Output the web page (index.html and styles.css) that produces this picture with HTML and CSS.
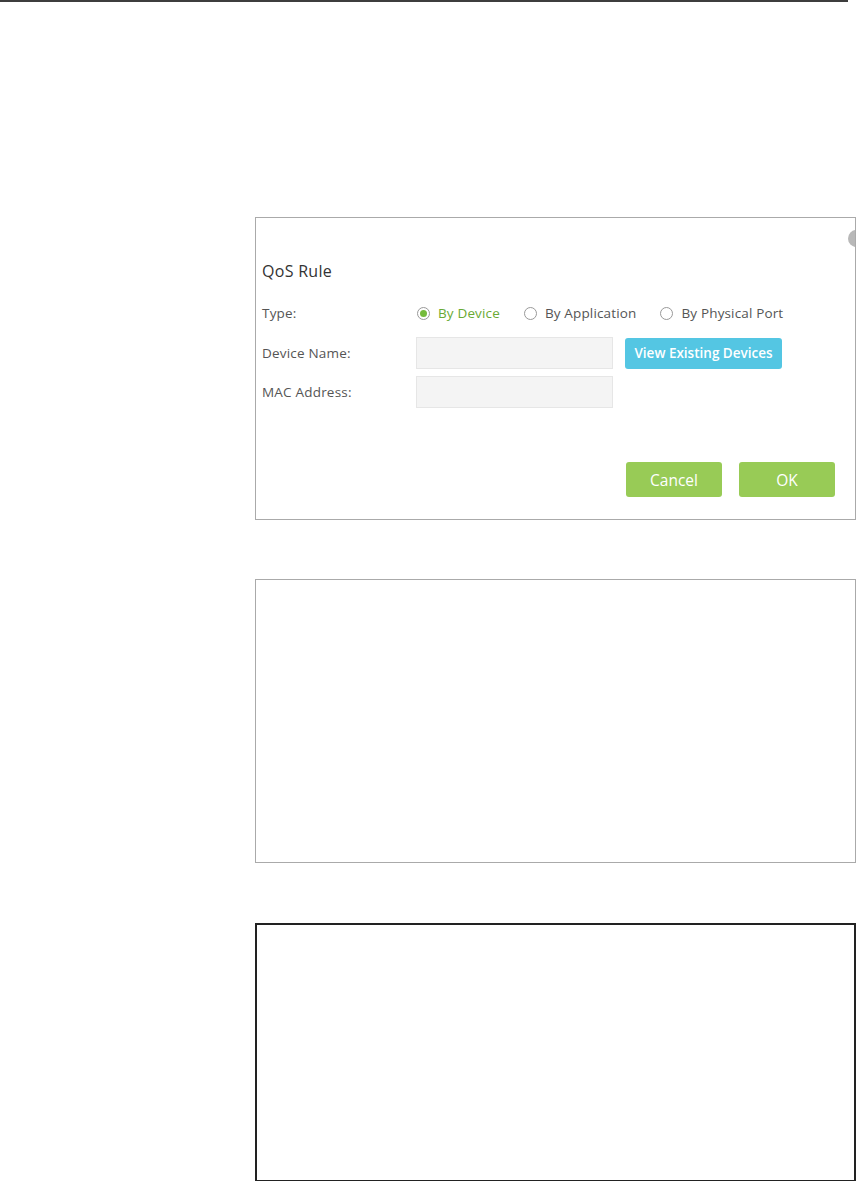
FILE: index.html
```html
<!DOCTYPE html>
<html lang="en">
<head>
    <meta charset="UTF-8">
    <meta name="viewport" content="width=device-width, initial-scale=1.0">
    <title>QoS Rule</title>
    <link rel="stylesheet" href="styles.css">
</head>
<body>
    <div class="top-rule"></div>

    <div class="page">
        <div class="panel dialog">
            <span class="close"></span>
            <h2 class="title">QoS Rule</h2>

            <div class="row type-row">
                <span class="label">Type:</span>
                <div class="radios">
                    <label class="radio checked"><span class="dot"></span>By Device</label>
                    <label class="radio"><span class="dot"></span>By Application</label>
                    <label class="radio"><span class="dot"></span>By Physical Port</label>
                </div>
            </div>

            <div class="row field-row">
                <span class="label">Device Name:</span>
                <input type="text" class="text-input">
                <button type="button" class="btn-view">View Existing Devices</button>
            </div>

            <div class="row field-row second">
                <span class="label">MAC Address:</span>
                <input type="text" class="text-input">
            </div>

            <div class="actions">
                <button type="button" class="btn-green">Cancel</button>
                <button type="button" class="btn-green">OK</button>
            </div>
        </div>

        <div class="panel blank"></div>

        <div class="panel dark"></div>
    </div>
</body>
</html>
```

FILE: styles.css
```css
body {
    margin: 0;
    padding: 0;
    background: #fff;
    font-family: "Open Sans", Arial, sans-serif;
    color: #555;
}

.top-rule {
    width: 848px;
    height: 2px;
    background-color: #3d3d3d;
}

.page {
    margin-left: 255px;
    width: 602px;
}

.panel {
    box-sizing: border-box;
    border: 1px solid #aaa;
    width: 601px;
}

.dialog {
    position: relative;
    overflow: hidden;
    margin-top: 215px;
    height: 303px;
    padding: 43px 20px 0 6px;
}

.close {
    position: absolute;
    top: 12px;
    right: -10px;
    width: 17px;
    height: 17px;
    border-radius: 50%;
    background-color: #b8b8b8;
}

.title {
    margin: 0;
    height: 20px;
    line-height: 20px;
    font-size: 16px;
    letter-spacing: 0.3px;
    font-weight: normal;
    color: #333;
}

.row {
    display: flex;
    align-items: center;
}

.label {
    width: 154px;
    font-size: 13.5px;
    letter-spacing: 0.2px;
    color: #555;
}

.type-row {
    margin-top: 22px;
    height: 20px;
}

.radios {
    display: flex;
    align-items: center;
}

.radio {
    display: flex;
    align-items: center;
    font-size: 13.5px;
    letter-spacing: 0.15px;
    color: #555;
    margin-right: 23px;
}

.radio .dot {
    box-sizing: border-box;
    width: 13px;
    height: 13px;
    border: 1px solid #999;
    border-radius: 50%;
    margin-right: 8px;
    margin-left: 1px;
    position: relative;
}

.radio.checked {
    color: #6aaa35;
}

.radio.checked .dot::after {
    content: "";
    position: absolute;
    top: 2px;
    left: 2px;
    width: 7px;
    height: 7px;
    border-radius: 50%;
    background-color: #75bb3c;
}

.field-row {
    margin-top: 14px;
    height: 32px;
}

.field-row.second {
    margin-top: 7px;
}

.text-input {
    box-sizing: border-box;
    width: 197px;
    height: 32px;
    margin: 0;
    background-color: #f4f4f4;
    border: 1px solid #e6e6e6;
    border-radius: 0;
}

.btn-view {
    margin-left: 12px;
    width: 157px;
    height: 31px;
    padding: 0;
    border: none;
    border-radius: 3px;
    background-color: #54c6e3;
    color: #fff;
    font-family: "Open Sans", Arial, sans-serif;
    font-size: 13.5px;
    font-weight: 600;
    cursor: pointer;
}

.actions {
    display: flex;
    justify-content: flex-end;
    gap: 17px;
    margin-top: 54px;
}

.btn-green {
    width: 96px;
    height: 35px;
    border: none;
    border-radius: 3px;
    background-color: #98cb56;
    color: #fff;
    font-family: "Open Sans", Arial, sans-serif;
    font-size: 15.5px;
    cursor: pointer;
}

.blank {
    margin-top: 59px;
    height: 284px;
}

.dark {
    margin-top: 60px;
    height: 259px;
    border: 2px solid #222;
}
```
